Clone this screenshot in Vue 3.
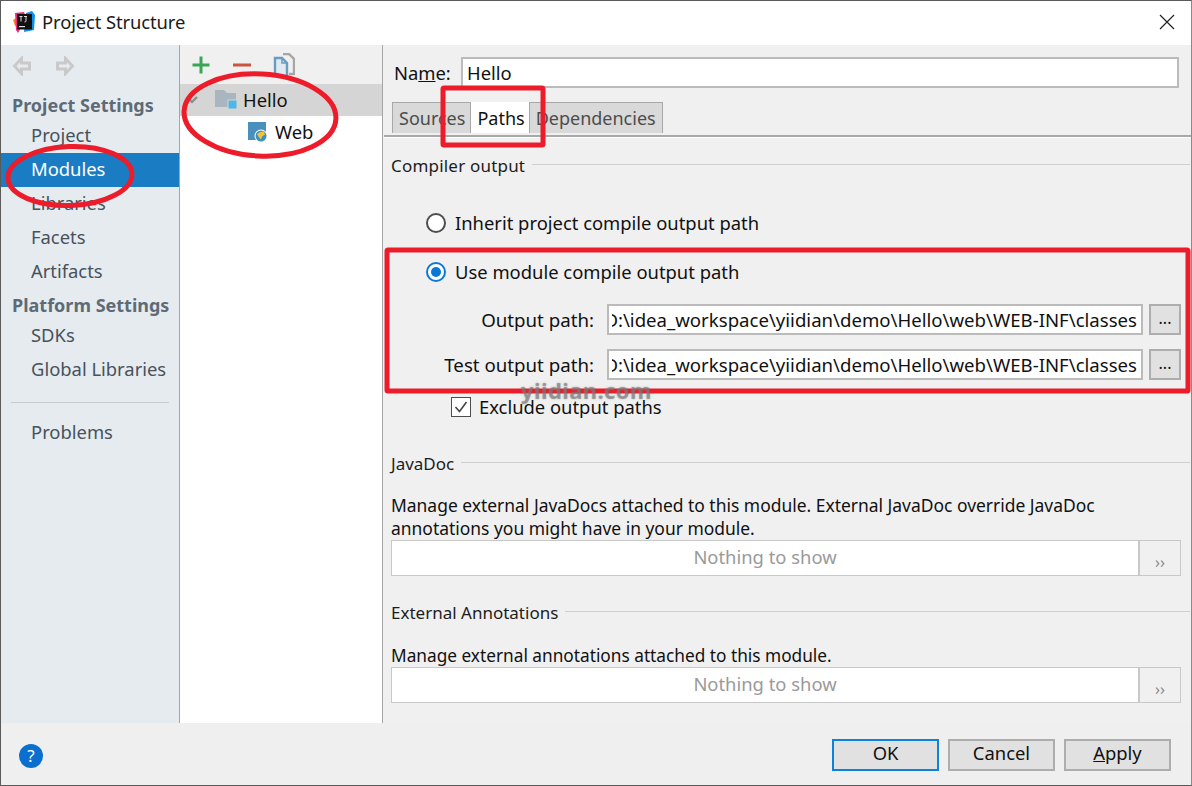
<script setup>
const navGroups = [
  { title: 'Project Settings', items: ['Project', 'Modules', 'Libraries', 'Facets', 'Artifacts'] },
  { title: 'Platform Settings', items: ['SDKs', 'Global Libraries'] },
]
const paths = [
  { label: 'Output path:', value: 'D:\\idea_workspace\\yiidian\\demo\\Hello\\web\\WEB-INF\\classes' },
  { label: 'Test output path:', value: 'D:\\idea_workspace\\yiidian\\demo\\Hello\\web\\WEB-INF\\classes' },
]
</script>

<template>
  <div class="window">
    <header class="titlebar">
      <svg class="logo" width="24" height="24" viewBox="0 0 24 24">
        <path d="M1 10 L6 7 L8 14 L3 16Z" fill="#f68a1e" />
        <path d="M3 3 L12 2 L14 8 L6 23 L4 20Z" fill="#ee2a7b" />
        <path d="M14 3 L20 1 L23 5 L22 20 L12 22Z" fill="#0b8ff0" />
        <rect x="5" y="4" width="15" height="15.500" fill="#111" />
        <rect x="7" y="16" width="6" height="1.200" fill="#ddd" />
        <path d="M7.500 6.500h3M9 6.500v5M12 6.500h3M14 6.500v4.500q0 1-1.500 1" stroke="#ddd" stroke-width="1" fill="none" />
      </svg>
      <span class="title">Project Structure</span>
      <svg class="close" width="16" height="16" viewBox="0 0 16 16">
        <path d="M1 1L15 15M15 1L1 15" stroke="#222" stroke-width="1.200" />
      </svg>
    </header>

    <div class="body">
      <aside class="sidebar">
        <div class="arrows">
          <svg width="20" height="20" viewBox="0 0 20 20"><path d="M9.500 2.500L2.500 10l7 7.500v-4.500h8V7h-8Z" fill="none" stroke="#c9c9c9" stroke-width="3" /></svg>
          <svg width="20" height="20" viewBox="0 0 20 20"><path d="M10.500 2.500l7 7.500-7 7.500v-4.500h-8V7h8Z" fill="none" stroke="#c9c9c9" stroke-width="3" /></svg>
        </div>
        <template v-for="g in navGroups" :key="g.title">
          <div class="nav-title">{{ g.title }}</div>
          <div v-for="i in g.items" :key="i" class="nav-item" :class="{ active: i === 'Modules' }">{{ i }}</div>
        </template>
        <div class="nav-sep"></div>
        <div class="nav-item">Problems</div>
      </aside>

      <section class="tree">
        <div class="tree-tools">
          <svg width="20" height="20" viewBox="0 0 20 20"><path d="M10 1.500v17M1.500 10h17" stroke="#3aa655" stroke-width="3" /></svg>
          <svg width="20" height="20" viewBox="0 0 20 20"><path d="M1 10h18" stroke="#c9553f" stroke-width="3" /></svg>
          <svg width="22" height="24" viewBox="0 0 22 24">
            <path d="M10 1h6l5 5v15h-5" fill="none" stroke="#a6a6a6" stroke-width="2.400" />
            <path d="M2 5h7l5 5v13H2Z" fill="#dfe9f0" stroke="#6a9cc0" stroke-width="2.400" />
            <path d="M9 5v5h5" fill="none" stroke="#6a9cc0" stroke-width="1.500" />
          </svg>
        </div>
        <div class="tree-row selected">
          <svg class="chev" width="14" height="10" viewBox="0 0 14 10"><path d="M2 2l5 5 5-5" fill="none" stroke="#8a8a8a" stroke-width="2.200" /></svg>
          <svg class="ico" width="24" height="22" viewBox="0 0 24 22">
            <path d="M1 1h9l3 3h9v14H1Z" fill="#a9b5bf" />
            <rect x="14" y="11" width="9" height="9" fill="#4db8e5" stroke="#d5d5d5" />
          </svg>
          <span>Hello</span>
        </div>
        <div class="tree-row child">
          <svg class="ico" width="22" height="22" viewBox="0 0 22 22">
            <rect x="2" y="1" width="18" height="18" fill="#4a90bd" />
            <circle cx="15" cy="15" r="6.500" fill="#fff" />
            <circle cx="15" cy="15" r="5.500" fill="#3d8fc7" />
            <path d="M11 13q3-3 7-2.500l1 3-3 2-1 3-2-2Z" fill="#f4c430" />
          </svg>
          <span>Web</span>
        </div>
      </section>

      <main class="content">
        <div class="name-row">
          <label class="name-label">Na<u>m</u>e:</label>
          <div class="field name-field">Hello</div>
        </div>
        <div class="tabs">
          <div class="tab">Sources</div>
          <div class="tab on">Paths</div>
          <div class="tab">Dependencies</div>
        </div>

        <div class="legend first"><span>Compiler output</span><i></i></div>

        <div class="radio-row one">
          <span class="radio"></span><span>Inherit project compile output path</span>
        </div>
        <div class="radio-row two">
          <span class="radio checked"></span><span>Use module compile output path</span>
        </div>

        <div class="path-list">
          <div v-for="p in paths" :key="p.label" class="path-row">
            <span class="path-label">{{ p.label }}</span>
            <div class="field path-field"><div class="path-clip"><span>{{ p.value }}</span></div></div>
            <button class="dots">...</button>
          </div>
        </div>

        <div class="check-row">
          <span class="check">
            <svg width="16" height="16" viewBox="0 0 16 16"><path d="M2.500 8l4 4.500 7-9.500" fill="none" stroke="#444" stroke-width="1.600" /></svg>
          </span>
          <span>Exclude output paths</span>
        </div>

        <div class="legend javadoc"><span>JavaDoc</span><i></i></div>
        <p class="desc">Manage external JavaDocs attached to this module. External JavaDoc override JavaDoc<br />annotations you might have in your module.</p>
        <div class="table">
          <div class="table-main">Nothing to show</div>
          <div class="table-side">››</div>
        </div>

        <div class="legend ext"><span>External Annotations</span><i></i></div>
        <p class="desc single">Manage external annotations attached to this module.</p>
        <div class="table">
          <div class="table-main">Nothing to show</div>
          <div class="table-side">››</div>
        </div>
      </main>
    </div>

    <footer class="footer">
      <div class="help">?</div>
      <div class="actions">
        <button class="btn default">OK</button>
        <button class="btn">Cancel</button>
        <button class="btn"><u>A</u>pply</button>
      </div>
    </footer>

    <svg class="marks" width="1192" height="786" viewBox="0 0 1192 786">
      <g fill="none" stroke="#ec1c2a">
        <ellipse cx="70" cy="176" rx="62" ry="29.500" stroke-width="5" transform="rotate(-2 70 176)" />
        <ellipse cx="260" cy="115" rx="76" ry="41" stroke-width="5" transform="rotate(3 260 115)" />
        <rect x="443" y="88" width="100" height="57" rx="1" stroke-width="5" />
        <rect x="387" y="250" width="801" height="141" rx="1" stroke-width="5" />
      </g>
    </svg>
    <div class="watermark">yiidian.com</div>
  </div>
</template>

<style>
html, body { margin: 0; background: #fff; }
</style>

<style scoped>
.window {
  position: relative;
  width: 1192px;
  height: 786px;
  box-sizing: border-box;
  border: 1px solid #5a5a5a;
  border-right-color: #8a8a8a;
  display: flex;
  flex-direction: column;
  overflow: hidden;
  background: #f0f0f0;
  color: #111;
  font: 18.400px/24px "Noto Sans", "Open Sans", sans-serif;
}
.titlebar {
  height: 44px;
  flex: none;
  background: #fff;
  display: flex;
  align-items: center;
  padding: 0 16px 2px 11px;
  box-sizing: border-box;
}
.logo { margin-right: 6px; }
.title { font-size: 18.400px; color: #1a1a1a; letter-spacing: -0.1px; }
.close { margin-left: auto; }
.body { flex: 1; display: flex; min-height: 0; }

.sidebar {
  width: 179px;
  flex: none;
  box-sizing: border-box;
  background: #e6ebf0;
  border-right: 1px solid #a6a6a6;
  color: #3c4a56;
}
.arrows { height: 44px; display: flex; align-items: center; gap: 23px; padding: 0 0 2px 11px; box-sizing: border-box; }
.nav-title {
  height: 30px;
  line-height: 32px;
  padding-left: 11px;
  font-weight: 700;
  font-size: 18px;
  color: #5e6b77;
}
.nav-item { height: 34px; line-height: 32px; padding-left: 30px; color: #46525c; }
.nav-item.active { background: #1a7dc4; color: #fff; }
.nav-sep { height: 1px; margin: 15px 10px 13px; background: #c6cbd0; }
.nav-sep + .nav-item { margin-top: 5px; }

.tree {
  width: 203px;
  flex: none;
  background: #fff;
  border-right: 1px solid #a6a6a6;
  box-sizing: border-box;
  display: flex;
  flex-direction: column;
}
.tree-tools {
  height: 39px;
  background: #f0f0f0;
  display: flex;
  align-items: center;
  gap: 21px;
  padding-left: 11px;
  flex: none;
}
.tree-row { height: 32px; display: flex; align-items: center; }
.tree-row.selected { background: #d5d5d5; }
.chev { margin-left: 5px; margin-right: 15px; }
.tree-row .ico { margin-right: 5px; }
.tree-row.child { padding-left: 66px; }
.tree-row.child .ico { margin-right: 7px; }

.content {
  flex: 1;
  min-width: 0;
  padding-left: 8px;
  display: flex;
  flex-direction: column;
  position: relative;
}
.field {
  background: #fff;
  border: 2px solid #bbb;
  box-sizing: border-box;
  display: flex;
  align-items: center;
  overflow: hidden;
  white-space: nowrap;
}
.name-row { display: flex; align-items: center; margin-top: 12px; height: 31px; }
.name-label { width: 70px; padding-left: 3px; box-sizing: border-box; }
.name-field { width: 718px; height: 31px; padding-left: 4px; }

.tabs {
  display: flex;
  margin-top: 14px;
  height: 35px;
  margin-left: -7px;
  padding-left: 8px;
  border-bottom: 2px solid #a8a8a8;
  box-sizing: border-box;
  box-shadow: 0 1px 0 #fff;
  font-size: 18px;
}
.tab {
  height: 31px;
  box-sizing: border-box;
  background: #d9d9d9;
  border: 1px solid #a8a8a8;
  border-bottom: none;
  color: #4c4c4c;
  padding: 0 5px 0 6px;
  line-height: 31px;
}
.tab.on { background: #fff; color: #111; padding: 0 4px 0 6px; border: none; line-height: 32px; }
.tab:nth-child(3) { padding: 0 6px 0 6px; }

.legend { display: flex; align-items: center; gap: 7px; color: #1c1c1c; font-size: 17px; }
.legend i { flex: 1; height: 1px; background: #cfcfcf; margin-right: 1px; margin-top: -3px; }
.legend.first { margin-top: 17px; letter-spacing: 0.2px; }
.legend.javadoc { margin-top: 33px; }
.legend.ext { margin-top: 25px; }
.radio-row { display: flex; align-items: center; height: 24px; }
.radio-row.one { margin-top: 33px; padding-left: 35px; }
.radio-row.two { margin-top: 25px; padding-left: 35px; }
.radio {
  width: 20px; height: 20px; box-sizing: border-box;
  border: 2px solid #4d4d4d; border-radius: 50%;
  background: #fff; margin-right: 9px; position: relative; flex: none;
}
.radio.checked { border-color: #0a78d7; }
.radio.checked::after {
  content: ''; position: absolute; inset: 3px; border-radius: 50%; background: #0a78d7;
}
.path-list { margin-top: 20px; display: flex; flex-direction: column; gap: 14px; }
.path-row { display: flex; align-items: center; height: 31px; }
.path-label { width: 203px; text-align: right; margin-right: 13px; flex: none; font-size: 18.700px; }
.path-field { width: 536px; height: 31px; flex: none; padding: 0 4px 0 3px; }
.path-clip { flex: 1; min-width: 0; overflow: hidden; display: flex; justify-content: flex-end; font-size: 18.600px; }
.path-clip span { flex: none; }
.dots {
  width: 32px; height: 31px; margin-left: 6px; padding: 0 0 4px; flex: none;
  background: #e1e1e1; border: 2px solid #adadad; color: #111;
  font: 16px/20px "Noto Sans", sans-serif;
}
.check-row { display: flex; align-items: center; margin-top: 15px; padding-left: 60px; height: 24px; }
.check {
  width: 20px; height: 20px; box-sizing: border-box; border: 1px solid #4d4d4d;
  background: #fff; margin-right: 8px; display: flex; align-items: center; justify-content: center;
}
.desc { margin: 18px 0 0; line-height: 23px; font-size: 17.450px; }
.desc.single { margin-top: 19px; font-size: 17.250px; }
.table { display: flex; height: 36px; width: 790px; flex: none; }
.table-main {
  flex: 1; background: #fff; border: 1px solid #c8c8c8; border-right: 2px solid #c8c8c8; text-align: center; color: #9a9a9a;
  line-height: 32px; box-sizing: border-box;
}
.table-side {
  width: 41px; box-sizing: border-box; border: 1px solid #c8c8c8; border-left: none; text-align: center;
  color: #888; font-size: 16px; line-height: 42px;
}

.footer {
  height: 62px;
  flex: none;
  background: #efefef;
  display: flex;
  align-items: flex-start;
  padding: 16px 20px 0 18px;
  box-sizing: border-box;
}
.help {
  width: 24px; height: 24px; border-radius: 50%; background: #0a6fcf; color: #fff; text-align: center;
  line-height: 24px; font-size: 17px; margin-top: 5px;
}
.actions { margin-left: auto; display: flex; gap: 9px; }
.btn {
  width: 107px; height: 32px; padding: 0 0 4px; box-sizing: border-box;
  background: #e1e1e1; border: 2px solid #adadad; color: #111;
  font: 18.400px/24px "Noto Sans", sans-serif;
}
.btn.default { border-color: #0a82de; }

.marks { position: absolute; left: -1px; top: -1px; pointer-events: none; }
.watermark {
  position: absolute; left: 520px; top: 376px;
  font: 700 22px/26px "Noto Sans", sans-serif;
  color: rgba(120, 120, 120, 0.6);
  text-shadow: 0 0 2px rgba(120, 120, 120, 0.5);
  letter-spacing: 0.4px;
  pointer-events: none;
}
</style>
